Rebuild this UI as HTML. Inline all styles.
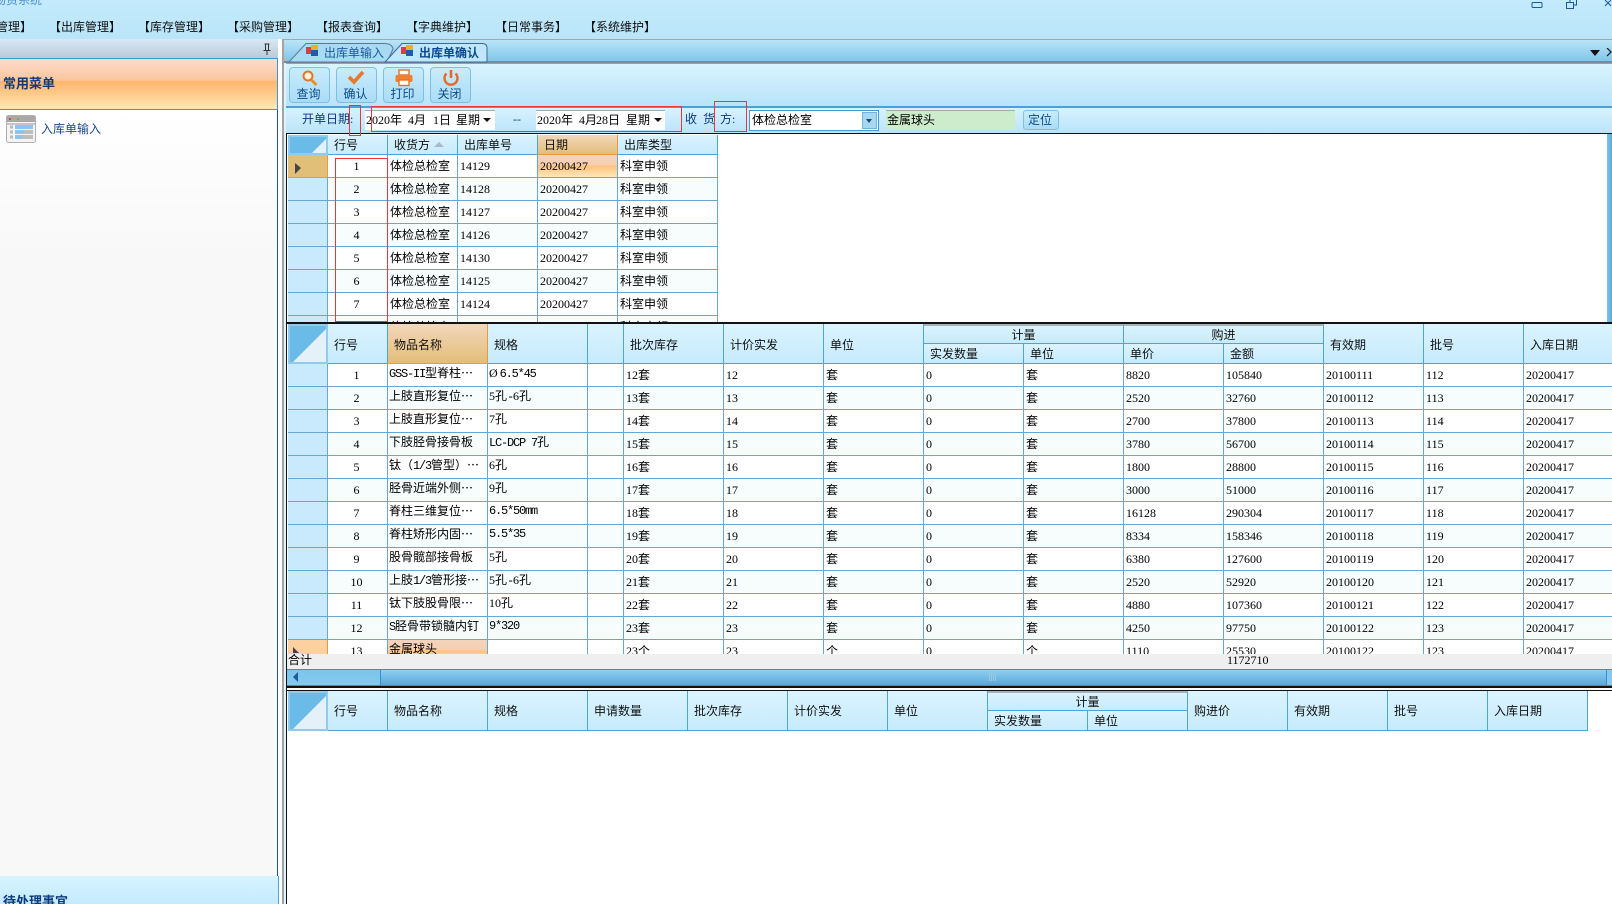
<!DOCTYPE html>
<html lang="zh"><head><meta charset="utf-8"><title>出库单确认</title>
<style>
html,body{margin:0;padding:0;width:1612px;height:904px;overflow:hidden;background:#fff}
body{position:relative;font:12px/14px "Liberation Serif","WenQuanYi Zen Hei","Noto Sans CJK SC",sans-serif;color:#000}
.a{position:absolute;white-space:nowrap}
.m{top:20px;color:#111}
.btn{position:absolute;top:67px;width:41px;height:36px;box-sizing:border-box;border:1px solid #7cc0e8;border-radius:4px;background:linear-gradient(#c8ecfc,#aadcf5);color:#0b4a8c;text-align:center}
.btn span{position:absolute;left:-1px;right:1px;top:19px;line-height:14px}
.btn svg{position:absolute;left:9px;top:1px}
.red{position:absolute;border:1px solid #e8383c;box-sizing:border-box;z-index:5}
table{position:absolute;border-collapse:separate;border-spacing:0;table-layout:fixed}
th,td{box-sizing:border-box;border-right:1px solid #67a8d3;border-bottom:1px solid #67a8d3;padding:0 0 0 2px;white-space:nowrap;overflow:hidden;font-weight:normal;text-align:left;height:23px;line-height:22px}
th{height:20px;line-height:19px;background:linear-gradient(#dbf3fe,#c6ebfd);border-color:#4ca4dc;padding-left:6px;color:#111}
th b{font-weight:normal;position:relative;top:1px}
#g2 th[rowspan] b{top:2px}
td:first-child{background:#c9eafc;border-right-color:#67a8d3}
td:nth-child(2){text-align:center;padding:0 2px 0 0}
tr:nth-child(even) td{background:#f7fcfd}
tr:nth-child(even) td:first-child{background:#c9eafc}
#g1 tr:nth-child(even) td{background:#fff}
#g1 tr:nth-child(odd) td{background:#f7fcfd}
#g1 tr td:first-child{background:#c9eafc}
#g1 tr td.o{background:linear-gradient(#f2d0bc 0,#f6cfb0 30%,#fdc27c 50%,#fff4d8 100%)}
#g1 tr td.sel{background:#e1bf78;border-color:#e89a40}
th.c{text-align:center;padding:0}
th.s{background:linear-gradient(#f2d8bc,#e3bd78);border-color:#e89a40}
th.g{border-top:2px solid #a8b0b8;line-height:16px}
.cn{position:relative;padding:0;background:#6bbbe8;border:2px solid #8fcbee}
.tri{position:absolute;right:0;bottom:0;width:0;height:0;border-style:solid;border-color:transparent transparent #e4f1f9 transparent}
#g2 td:nth-child(3),#g2 td:nth-child(4){padding-left:1px;line-height:18px;vertical-align:top}
#g2 td:nth-child(n+5){padding-left:2px}
.o{background:linear-gradient(#f2d4be 0,#f6cfb0 45%,#fdc27c 50%,#ffe9b8 100%)!important}
.t{font-family:"Liberation Mono",monospace;letter-spacing:-1.2px}
.e{font-family:"WenQuanYi Zen Hei","Noto Sans CJK SC",sans-serif}
</style></head><body>

<!-- title & menu bar -->
<div class="a" style="left:0;top:0;width:1612px;height:39px;background:linear-gradient(#c4ebfd,#bae4f8)"></div>
<div class="a" style="left:-6px;top:-7px;color:#4a90d0">物资系统</div>
<svg class="a" style="left:1530px;top:0" width="82" height="9"><rect x="2" y="2.5" width="10" height="5" rx="1" fill="none" stroke="#1c5a9a"/><rect x="36.5" y="2.5" width="7" height="6" fill="none" stroke="#1c5a9a"/><path d="M40 2.5V0M44 5h2.5V0" fill="none" stroke="#1c5a9a"/><path d="M75 0l3 3 3-3M75 6l3-3 3 3" fill="none" stroke="#1c5a9a"/></svg>
<div class="a m" style="left:-40px">【入库管理】</div>
<div class="a m" style="left:49px">【出库管理】</div>
<div class="a m" style="left:138px">【库存管理】</div>
<div class="a m" style="left:227px">【采购管理】</div>
<div class="a m" style="left:316px">【报表查询】</div>
<div class="a m" style="left:406px">【字典维护】</div>
<div class="a m" style="left:495px">【日常事务】</div>
<div class="a m" style="left:584px">【系统维护】</div>

<!-- left panel -->
<div class="a" style="left:0;top:39px;width:278px;height:19px;background:linear-gradient(#d9e8f5,#bacad8)"></div>
<svg class="a" style="left:262px;top:43px" width="10" height="12"><path d="M2.5 1h5M3.5 1v6M6.5 1v6M1.5 7.5h7M5 8v4" fill="none" stroke="#333"/></svg>
<div class="a" style="left:0;top:58px;width:278px;height:52px;box-sizing:border-box;border-top:1px solid #3f96d4;border-bottom:1px solid #3f96d4;border-right:1px solid #3f96d4;background:linear-gradient(#fbdccb 0,#fbc79f 42%,#fdb56e 45%,#fdcb8c 70%,#fee9b6 100%)"></div>
<div class="a" style="left:3px;top:77px;font-weight:bold;font-size:13px;color:#0c3a80">常用菜单</div>
<div class="a" style="left:0;top:110px;width:277px;height:766px;background:linear-gradient(#fff,#f8f8f8 20%);border-right:1px solid #1c4fc0"></div>
<svg class="a" style="left:6px;top:115px" width="30" height="29">
<rect x="0.5" y="0.5" width="29" height="27" rx="2" fill="#f4f4f4" stroke="#b0b0b0"/>
<rect x="1" y="1" width="28" height="6" fill="#a8a8a8"/>
<rect x="3" y="3" width="2" height="2" fill="#c84a3a"/><rect x="7" y="3" width="2" height="2" fill="#d8a040"/><rect x="11" y="3" width="2" height="2" fill="#80a850"/>
<path d="M1 9h28" stroke="#999"/>
<rect x="4" y="10.5" width="3" height="3" fill="#bbb"/><rect x="9" y="10" width="18" height="4" fill="#8cc4f0"/>
<rect x="4" y="15.5" width="3" height="3" fill="#bbb"/><rect x="9" y="15" width="18" height="4" fill="#bdbdbd"/><rect x="9" y="15" width="9" height="4" fill="#8cc4f0"/>
<rect x="4" y="20.5" width="3" height="3" fill="#bbb"/><rect x="9" y="20" width="18" height="4" fill="#bdbdbd"/><rect x="9" y="20" width="7" height="4" fill="#8cc4f0"/>
</svg>
<div class="a" style="left:41px;top:122px;color:#1c4a8a">入库单输入</div>
<div class="a" style="left:0;top:876px;width:278px;height:28px;background:linear-gradient(#d7f3ff,#c4ebfd);border-right:1px solid #4ca4dc"></div>
<div class="a" style="left:3px;top:895px;font-weight:bold;font-size:13px;color:#0c3a80">待处理事宜</div>

<!-- separators -->
<div class="a" style="left:282px;top:39px;width:2px;height:865px;background:#a4a4a4"></div>
<div class="a" style="left:284px;top:39px;width:2px;height:865px;background:#dff3fc"></div>

<!-- tab bar -->
<div class="a" style="left:284px;top:39px;width:1328px;height:24px;box-sizing:border-box;border-top:1px solid #a0a8b0;border-bottom:2px solid #7a8a98;background:linear-gradient(#bbe4f8,#80c6ec)"></div>
<svg class="a" style="left:284px;top:42px" width="210" height="21">
<path d="M5 20L22 1.5H100Q108 1.5 109 7L103 20Z" fill="#a8daf4" stroke="#5d7a90"/>
<path d="M101 20L118 1.5H198Q203 1.5 203 6V20Z" fill="#bfe6fa" stroke="#3d6a90"/>
<rect x="22" y="5" width="6" height="7" fill="#d8403a"/><rect x="27" y="3" width="7" height="5" fill="#e8b030"/><rect x="27" y="8" width="7" height="6" fill="#1f5cb0"/>
<rect x="117" y="5" width="6" height="7" fill="#d8403a"/><rect x="122" y="3" width="7" height="5" fill="#e8b030"/><rect x="122" y="8" width="7" height="6" fill="#1f5cb0"/>
</svg>
<div class="a" style="left:324px;top:46px;color:#1c5a9a">出库单输入</div>
<div class="a" style="left:419px;top:46px;color:#0b4a8c;font-weight:bold">出库单确认</div>
<svg class="a" style="left:1590px;top:48px" width="22" height="10"><path d="M0 2h10L5 8Z" fill="#111"/><path d="M17 0l4 4-4 4" fill="none" stroke="#111" stroke-width="1.2"/></svg>

<!-- toolbar -->
<div class="a" style="left:286px;top:63px;width:1326px;height:45px;box-sizing:border-box;border-top:1px solid #5ab4e8;border-bottom:2px solid #4ba0dc;background:linear-gradient(#d9f4ff,#b8e3f9)"></div>
<div class="btn" style="left:289px"><svg width="22" height="18"><circle cx="9" cy="7" r="4.5" fill="#fff3d8" stroke="#e8722a" stroke-width="2"/><path d="M12.5 11l5 5" stroke="#e8922a" stroke-width="3"/></svg><span>查询</span></div>
<div class="btn" style="left:336px"><svg width="22" height="18"><path d="M3 8l5 5 9-10" fill="none" stroke="#e8782a" stroke-width="3.6"/></svg><span>确认</span></div>
<div class="btn" style="left:383px"><svg width="22" height="18"><rect x="6" y="1" width="10" height="5" fill="#fff" stroke="#e8722a" stroke-width="1.4"/><rect x="2.5" y="6" width="17" height="7" rx="1.5" fill="#ee8030"/><rect x="6" y="11" width="10" height="5.5" fill="#fff" stroke="#e8722a" stroke-width="1.4"/></svg><span>打印</span></div>
<div class="btn" style="left:430px"><svg width="22" height="18"><path d="M6.5 4.5a6.5 6.5 0 1 0 9 0" fill="none" stroke="#e8682a" stroke-width="2.4"/><path d="M11 1v8" stroke="#e8682a" stroke-width="2.6"/></svg><span>关闭</span></div>

<!-- filter bar -->
<div class="a" style="left:286px;top:108px;width:1326px;height:26px;background:linear-gradient(#d8f2ff,#b8e3f9)"></div>
<div class="a" style="left:302px;top:112px;color:#0b3a7c">开单日期:</div>
<div class="a" style="left:365px;top:110px;width:130px;height:20px;background:#fff;border-top:1px solid #aaa;box-sizing:border-box"></div>
<div class="a" style="left:366px;top:113px">2020年</div><div class="a" style="left:408px;top:113px">4月</div><div class="a" style="left:433px;top:113px">1日</div><div class="a" style="left:456px;top:113px">星期</div>
<svg class="a" style="left:483px;top:118px" width="9" height="5"><path d="M0 0h8L4 4Z" fill="#111"/></svg>
<div class="a" style="left:513px;top:112px;color:#0b3a7c">--</div>
<div class="a" style="left:536px;top:110px;width:129px;height:20px;background:#fff;border-top:1px solid #aaa;box-sizing:border-box"></div>
<div class="a" style="left:537px;top:113px">2020年</div><div class="a" style="left:579px;top:113px">4月</div><div class="a" style="left:596px;top:113px">28日</div><div class="a" style="left:626px;top:113px">星期</div>
<svg class="a" style="left:654px;top:118px" width="9" height="5"><path d="M0 0h8L4 4Z" fill="#111"/></svg>
<div class="a" style="left:685px;top:112px;color:#0b3a7c">收</div>
<div class="a" style="left:703px;top:112px;color:#0b3a7c">货</div>
<div class="a" style="left:720px;top:112px;color:#0b3a7c">方:</div>
<div class="a" style="left:749px;top:110px;width:130px;height:21px;box-sizing:border-box;background:#fff;border:1px solid #3f9ad8"></div>
<div class="a" style="left:752px;top:113px">体检总检室</div>
<div class="a" style="left:862px;top:112px;width:15px;height:17px;box-sizing:border-box;background:#a8d8f0;border:1px solid #6ab4e0"></div>
<svg class="a" style="left:866px;top:119px" width="7" height="5"><path d="M0 0h6L3 4Z" fill="#1c4a7a"/></svg>
<div class="a" style="left:886px;top:110px;width:129px;height:19px;box-sizing:border-box;background:#cdeccb;border-top:1px solid #aaa"></div>
<div class="a" style="left:887px;top:113px">金属球头</div>
<div class="a" style="left:1023px;top:110px;width:36px;height:20px;box-sizing:border-box;border:1px solid #7cc0e8;border-radius:3px;background:linear-gradient(#c8ecfc,#aadcf5);text-align:center;color:#0b4a8c;line-height:18px;padding-right:2px">定位</div>

<!-- grid frame lines -->
<div class="a" style="left:286px;top:133px;width:1326px;height:1px;background:#111"></div>
<div class="a" style="left:286px;top:134px;width:1px;height:770px;background:#111"></div>

<!-- top grid -->
<div class="a" style="left:287px;top:134px;width:1325px;height:188px;overflow:hidden;background:#fff">
<table id="g1" style="left:1px;top:1px;width:430px">
<colgroup><col style="width:40px"><col style="width:60px"><col style="width:70px"><col style="width:80px"><col style="width:80px"><col style="width:100px"></colgroup>
<tr><th class="cn"><div class="tri" style="border-width:0 0 14px 14px"></div></th><th><b>行号</b></th><th><b>收货方</b><span style="position:absolute;left:146px;top:7px;width:0;height:0;border:5px solid transparent;border-top:0;border-bottom:5px solid #a8b8c4"></span></th><th><b>出库单号</b></th><th class="s"><b>日期</b></th><th><b>出库类型</b></th></tr>
<tr><td class="sel"><svg width="10" height="12" style="display:block;margin:5px 0 0 4px"><path d="M1 0l6 5-6 6z" fill="#444"/></svg></td><td>1</td><td>体检总检室</td><td>14129</td><td class="o">20200427</td><td>科室申领</td></tr>
<tr><td></td><td>2</td><td>体检总检室</td><td>14128</td><td>20200427</td><td>科室申领</td></tr>
<tr><td></td><td>3</td><td>体检总检室</td><td>14127</td><td>20200427</td><td>科室申领</td></tr>
<tr><td></td><td>4</td><td>体检总检室</td><td>14126</td><td>20200427</td><td>科室申领</td></tr>
<tr><td></td><td>5</td><td>体检总检室</td><td>14130</td><td>20200427</td><td>科室申领</td></tr>
<tr><td></td><td>6</td><td>体检总检室</td><td>14125</td><td>20200427</td><td>科室申领</td></tr>
<tr><td></td><td>7</td><td>体检总检室</td><td>14124</td><td>20200427</td><td>科室申领</td></tr>
<tr><td></td><td>8</td><td>体检总检室</td><td>14123</td><td>20200427</td><td>科室申领</td></tr>
</table>
<div class="a" style="left:1320px;top:0;width:5px;height:188px;background:linear-gradient(90deg,#7cc4ec,#58a8dc)"></div>
</div>
<div class="a" style="left:287px;top:322px;width:1325px;height:2px;background:#111"></div>

<!-- middle grid -->
<div class="a" style="left:287px;top:324px;width:1325px;height:330px;overflow:hidden;background:#fff">
<table id="g2" style="left:1px;top:0;width:1336px">
<colgroup><col style="width:40px"><col style="width:60px"><col style="width:100px"><col style="width:100px"><col style="width:36px"><col style="width:100px"><col style="width:100px"><col style="width:100px"><col style="width:100px"><col style="width:100px"><col style="width:100px"><col style="width:100px"><col style="width:100px"><col style="width:100px"><col style="width:100px"></colgroup>
<tr><th class="cn" rowspan="2"><div class="tri" style="border-width:0 0 33px 33px"></div></th><th rowspan="2"><b>行号</b></th><th rowspan="2" class="s"><b>物品名称</b></th><th rowspan="2"><b>规格</b></th><th rowspan="2"></th><th rowspan="2"><b>批次库存</b></th><th rowspan="2"><b>计价实发</b></th><th rowspan="2"><b>单位</b></th><th colspan="2" class="c g">计量</th><th colspan="2" class="c g">购进</th><th rowspan="2"><b>有效期</b></th><th rowspan="2"><b>批号</b></th><th rowspan="2"><b>入库日期</b></th></tr>
<tr><th><b>实发数量</b></th><th><b>单位</b></th><th><b>单价</b></th><th><b>金额</b></th></tr>
<tr><td></td><td>1</td><td><span class="t">GSS-II</span>型脊柱<span class="e">…</span></td><td>Ø<span class="t" style="margin-left:2px">6.5*45</span></td><td></td><td>12套</td><td>12</td><td>套</td><td>0</td><td>套</td><td>8820</td><td>105840</td><td>20100111</td><td>112</td><td>20200417</td></tr>
<tr><td></td><td>2</td><td>上肢直形复位<span class="e">…</span></td><td>5孔<span class="t">-</span>6孔</td><td></td><td>13套</td><td>13</td><td>套</td><td>0</td><td>套</td><td>2520</td><td>32760</td><td>20100112</td><td>113</td><td>20200417</td></tr>
<tr><td></td><td>3</td><td>上肢直形复位<span class="e">…</span></td><td>7孔</td><td></td><td>14套</td><td>14</td><td>套</td><td>0</td><td>套</td><td>2700</td><td>37800</td><td>20100113</td><td>114</td><td>20200417</td></tr>
<tr><td></td><td>4</td><td>下肢胫骨接骨板</td><td><span class="t">LC-DCP 7</span>孔</td><td></td><td>15套</td><td>15</td><td>套</td><td>0</td><td>套</td><td>3780</td><td>56700</td><td>20100114</td><td>115</td><td>20200417</td></tr>
<tr><td></td><td>5</td><td>钛（<span class="t">1/3</span>管型）<span class="e">…</span></td><td>6孔</td><td></td><td>16套</td><td>16</td><td>套</td><td>0</td><td>套</td><td>1800</td><td>28800</td><td>20100115</td><td>116</td><td>20200417</td></tr>
<tr><td></td><td>6</td><td>胫骨近端外侧<span class="e">…</span></td><td>9孔</td><td></td><td>17套</td><td>17</td><td>套</td><td>0</td><td>套</td><td>3000</td><td>51000</td><td>20100116</td><td>117</td><td>20200417</td></tr>
<tr><td></td><td>7</td><td>脊柱三维复位<span class="e">…</span></td><td class="t">6.5*50mm</td><td></td><td>18套</td><td>18</td><td>套</td><td>0</td><td>套</td><td>16128</td><td>290304</td><td>20100117</td><td>118</td><td>20200417</td></tr>
<tr><td></td><td>8</td><td>脊柱矫形内固<span class="e">…</span></td><td class="t">5.5*35</td><td></td><td>19套</td><td>19</td><td>套</td><td>0</td><td>套</td><td>8334</td><td>158346</td><td>20100118</td><td>119</td><td>20200417</td></tr>
<tr><td></td><td>9</td><td>股骨髋部接骨板</td><td>5孔</td><td></td><td>20套</td><td>20</td><td>套</td><td>0</td><td>套</td><td>6380</td><td>127600</td><td>20100119</td><td>120</td><td>20200417</td></tr>
<tr><td></td><td>10</td><td>上肢<span class="t">1/3</span>管形接<span class="e">…</span></td><td>5孔<span class="t">-</span>6孔</td><td></td><td>21套</td><td>21</td><td>套</td><td>0</td><td>套</td><td>2520</td><td>52920</td><td>20100120</td><td>121</td><td>20200417</td></tr>
<tr><td></td><td>11</td><td>钛下肢股骨限<span class="e">…</span></td><td>10孔</td><td></td><td>22套</td><td>22</td><td>套</td><td>0</td><td>套</td><td>4880</td><td>107360</td><td>20100121</td><td>122</td><td>20200417</td></tr>
<tr><td></td><td>12</td><td><span class="t">S</span>胫骨带锁髓内钉</td><td class="t">9*320</td><td></td><td>23套</td><td>23</td><td>套</td><td>0</td><td>套</td><td>4250</td><td>97750</td><td>20100122</td><td>123</td><td>20200417</td></tr>
<tr><td style="background:#fdd0a0;border-right-color:#e89a40"></td><td>13</td><td class="o">金属球头</td><td></td><td></td><td>23个</td><td>23</td><td>个</td><td>0</td><td>个</td><td>1110</td><td>25530</td><td>20100122</td><td>123</td><td>20200417</td></tr>
</table>
</div>

<!-- footer -->
<div class="a" style="left:287px;top:654px;width:1325px;height:15px;background:#efefef"></div>
<svg class="a" style="left:293px;top:647px" width="8" height="8"><path d="M0 0l6 6H0z" fill="#444"/></svg>
<div class="a" style="left:288px;top:653px">合计</div>
<div class="a" style="left:1227px;top:653px">1172710</div>

<!-- scrollbar -->
<div class="a" style="left:287px;top:669px;width:1325px;height:17px;box-sizing:border-box;border-top:1px solid #3a8fd0;border-bottom:1px solid #3a8fd0;background:linear-gradient(#8ed0f0,#58a8dc)"></div>
<div class="a" style="left:287px;top:670px;width:94px;height:15px;box-sizing:border-box;border-right:1px solid #3a8fd0;background:linear-gradient(#7cc4ec,#84caee)"></div>
<svg class="a" style="left:293px;top:672px" width="6" height="10"><path d="M5 0v10L0 5z" fill="#1c5a9a"/></svg>
<svg class="a" style="left:989px;top:673px" width="8" height="8"><path d="M.5 0v8M2.5 0v8M4.5 0v8M6.5 0v8" stroke="#9cc8e0"/></svg>
<div class="a" style="left:1606px;top:670px;width:6px;height:15px;background:#84caee;border-left:1px solid #3a8fd0;box-sizing:border-box"></div>
<div class="a" style="left:286px;top:686px;width:1326px;height:2px;background:#111"></div>
<div class="a" style="left:286px;top:690px;width:1326px;height:1px;background:#111"></div>

<!-- bottom grid -->
<div class="a" style="left:287px;top:691px;width:1325px;height:213px;overflow:hidden;background:#fff">
<table style="left:1px;top:0;width:1300px">
<colgroup><col style="width:40px"><col style="width:60px"><col style="width:100px"><col style="width:100px"><col style="width:100px"><col style="width:100px"><col style="width:100px"><col style="width:100px"><col style="width:100px"><col style="width:100px"><col style="width:100px"><col style="width:100px"><col style="width:100px"><col style="width:100px"></colgroup>
<tr><th class="cn" rowspan="2"><div class="tri" style="border-width:0 0 33px 33px"></div></th><th rowspan="2"><b>行号</b></th><th rowspan="2"><b>物品名称</b></th><th rowspan="2"><b>规格</b></th><th rowspan="2"><b>申请数量</b></th><th rowspan="2"><b>批次库存</b></th><th rowspan="2"><b>计价实发</b></th><th rowspan="2"><b>单位</b></th><th colspan="2" class="c g">计量</th><th rowspan="2"><b>购进价</b></th><th rowspan="2"><b>有效期</b></th><th rowspan="2"><b>批号</b></th><th rowspan="2"><b>入库日期</b></th></tr>
<tr><th><b>实发数量</b></th><th><b>单位</b></th></tr>
</table>
</div>

<!-- red annotation boxes -->
<div class="red" style="left:349px;top:105px;width:12px;height:31px"></div>
<div class="red" style="left:371px;top:106px;width:311px;height:26px"></div>
<div class="red" style="left:714px;top:101px;width:33px;height:31px"></div>
<div class="red" style="left:335px;top:158px;width:53px;height:164px"></div>
</body></html>
